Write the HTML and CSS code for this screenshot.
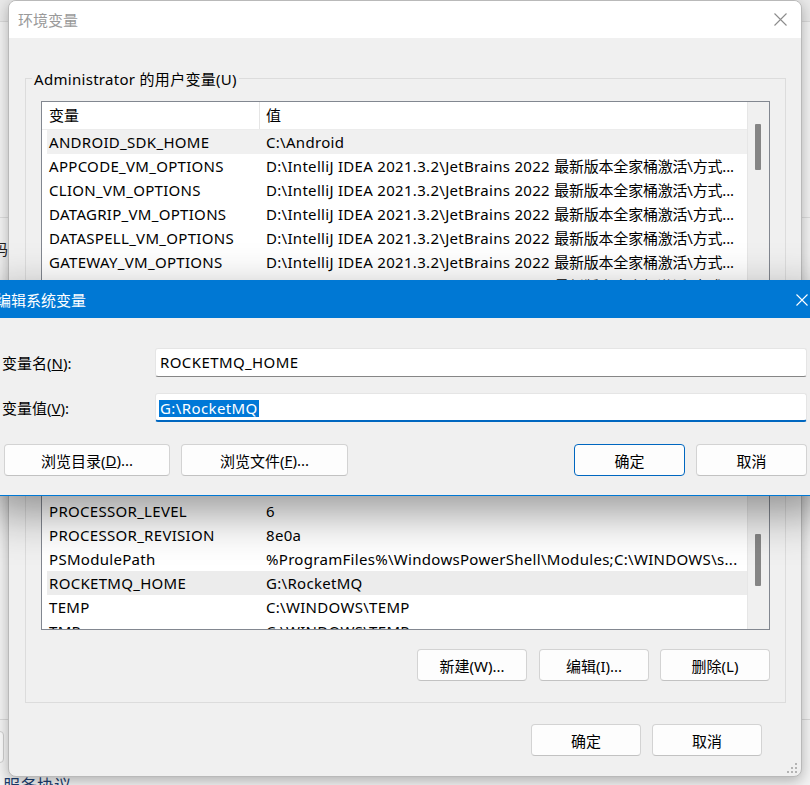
FILE: index.html
```html
<!DOCTYPE html>
<html lang="zh-CN">
<head>
<meta charset="utf-8">
<title>环境变量</title>
<link rel="stylesheet" href="styles.css">
</head>
<body>
<div class="desk">
  <div class="desk-bar"></div>
  <div class="desk-pane"></div>
  <div class="desk-glyph">码</div>
  <div class="desk-space"></div>
  <div class="desk-btn"></div>
  <div class="desk-link">服务协议</div>
</div>

<div class="envwin">
  <div class="titlebar">
    <span class="title">环境变量</span>
    <svg class="x-icon" width="13" height="13" viewBox="0 0 13 13"><path d="M0.5 0.5 L12.5 12.5 M12.5 0.5 L0.5 12.5" stroke="#8c8c8c" stroke-width="1.1" fill="none"/></svg>
  </div>
  <div class="envbody">
    <div class="group g1">
      <div class="legend">Administrator 的用户变量(U)</div>
      <div class="list l1">
        <div class="list-main">
          <div class="lhead"><div class="hc1">变量</div><div class="hc2">值</div></div>
          <div class="row sel"><div class="c1">ANDROID_SDK_HOME</div><div class="c2">C:\Android</div></div>
          <div class="row"><div class="c1">APPCODE_VM_OPTIONS</div><div class="c2">D:\IntelliJ IDEA 2021.3.2\JetBrains 2022 <span class="zh">最新版本全家桶激活\方式...</span></div></div>
          <div class="row"><div class="c1">CLION_VM_OPTIONS</div><div class="c2">D:\IntelliJ IDEA 2021.3.2\JetBrains 2022 <span class="zh">最新版本全家桶激活\方式...</span></div></div>
          <div class="row"><div class="c1">DATAGRIP_VM_OPTIONS</div><div class="c2">D:\IntelliJ IDEA 2021.3.2\JetBrains 2022 <span class="zh">最新版本全家桶激活\方式...</span></div></div>
          <div class="row"><div class="c1">DATASPELL_VM_OPTIONS</div><div class="c2">D:\IntelliJ IDEA 2021.3.2\JetBrains 2022 <span class="zh">最新版本全家桶激活\方式...</span></div></div>
          <div class="row"><div class="c1">GATEWAY_VM_OPTIONS</div><div class="c2">D:\IntelliJ IDEA 2021.3.2\JetBrains 2022 <span class="zh">最新版本全家桶激活\方式...</span></div></div>
          <div class="row"><div class="c1">GOLAND_VM_OPTIONS</div><div class="c2">D:\IntelliJ IDEA 2021.3.2\JetBrains 2022 <span class="zh">最新版本全家桶激活\方式...</span></div></div>
          <div class="row"><div class="c1">IDEA_VM_OPTIONS</div><div class="c2">D:\IntelliJ IDEA 2021.3.2\JetBrains 2022 <span class="zh">最新版本全家桶激活\方式...</span></div></div>
        </div>
        <div class="vscroll"><div class="thumb t1"></div></div>
      </div>
      <div class="btnrow">
        <button class="btn">新建(N)...</button>
        <button class="btn">编辑(E)...</button>
        <button class="btn">删除(D)</button>
      </div>
    </div>

    <div class="group g2">
      <div class="legend">系统变量(S)</div>
      <div class="list l2">
        <div class="list-main">
          <div class="lhead"><div class="hc1">变量</div><div class="hc2">值</div></div>
          <div class="row"><div class="c1">PATHEXT</div><div class="c2">.COM;.EXE;.BAT;.CMD;.VBS;.VBE;.JS;.JSE;.WSF;.WSH;.MSC</div></div>
          <div class="row"><div class="c1">PROCESSOR_ARCHITECTURE</div><div class="c2">AMD64</div></div>
          <div class="row"><div class="c1">PROCESSOR_LEVEL</div><div class="c2">6</div></div>
          <div class="row"><div class="c1">PROCESSOR_REVISION</div><div class="c2">8e0a</div></div>
          <div class="row"><div class="c1">PSModulePath</div><div class="c2">%ProgramFiles%\WindowsPowerShell\Modules;C:\WINDOWS\s...</div></div>
          <div class="row sel2"><div class="c1">ROCKETMQ_HOME</div><div class="c2">G:\RocketMQ</div></div>
          <div class="row"><div class="c1">TEMP</div><div class="c2">C:\WINDOWS\TEMP</div></div>
          <div class="row"><div class="c1">TMP</div><div class="c2">C:\WINDOWS\TEMP</div></div>
        </div>
        <div class="vscroll"><div class="thumb t2"></div></div>
      </div>
      <div class="btnrow">
        <button class="btn">新建(W)...</button>
        <button class="btn">编辑(I)...</button>
        <button class="btn">删除(L)</button>
      </div>
    </div>

    <div class="footer">
      <button class="btn">确定</button>
      <button class="btn">取消</button>
    </div>
  </div>
  <svg class="grip" width="12" height="12" viewBox="0 0 12 12" fill="#b4b4b4">
    <rect x="9" y="1" width="2" height="2"/>
    <rect x="5" y="5" width="2" height="2"/><rect x="9" y="5" width="2" height="2"/>
    <rect x="1" y="9" width="2" height="2"/><rect x="5" y="9" width="2" height="2"/><rect x="9" y="9" width="2" height="2"/>
  </svg>
</div>

<div class="editdlg">
  <div class="dtitle">
    <span class="dtitle-text">编辑系统变量</span>
    <svg width="12" height="12" viewBox="0 0 12 12"><path d="M0.5 0.5 L11.5 11.5 M11.5 0.5 L0.5 11.5" stroke="#ffffff" stroke-width="1.1" fill="none"/></svg>
  </div>
  <div class="dbody">
    <label class="flabel">变量名(<u>N</u>):</label>
    <div class="input">ROCKETMQ_HOME</div>
    <label class="flabel">变量值(<u>V</u>):</label>
    <div class="input focus"><span class="selection">G:\RocketMQ</span></div>
    <div class="dbtns">
      <button class="btn wide">浏览目录(<u>D</u>)...</button>
      <button class="btn wide2">浏览文件(<u>F</u>)...</button>
      <span class="spacer"></span>
      <button class="btn dbtn default">确定</button>
      <button class="btn dbtn">取消</button>
    </div>
  </div>
</div>
</body>
</html>
```

FILE: styles.css
```css
* { box-sizing: border-box; }

html, body {
  margin: 0;
  padding: 0;
}

body {
  width: 810px;
  height: 785px;
  overflow: hidden;
  position: relative;
  background: #f3f3f3;
  font-family: "Noto Sans", "Noto Sans CJK SC", sans-serif;
  font-size: 15px;
  color: #000;
}

/* background application behind the windows */
.desk {
  display: flex;
  flex-direction: column;
  height: 785px;
}
.desk > * { flex: none; }
.desk-bar {
  height: 22px;
  background: #e9e9e9;
  border-bottom: 1px solid #d9d9d9;
}
.desk-pane {
  height: 196px;
  background: #f2f2f2;
  border-bottom: 1px solid #dcdcdc;
}
.desk-glyph {
  margin-top: 21px;
  margin-left: -7px;
  line-height: 20px;
  font-size: 15px;
  color: #222;
}
.desk-space {
  height: 461px;
  border-bottom: 1px solid #d8d8d8;
}
.desk-btn {
  margin-top: 11px;
  margin-left: -8px;
  width: 12px;
  height: 32px;
  border: 1px solid #cfcfcf;
  border-radius: 4px;
  background: #fbfbfb;
}
.desk-link {
  margin-top: 12px;
  margin-left: 3px;
  font-size: 17px;
  line-height: 22px;
  color: #1c3d6e;
}

/* environment variables window */
.envwin {
  position: absolute;
  left: 8px;
  top: 0;
  width: 794px;
  height: 777px;
  border: 1px solid #b9b9b9;
  border-radius: 8px;
  background: #f0f0f0;
  box-shadow: 0 4px 14px rgba(0, 0, 0, 0.28);
  overflow: hidden;
  display: flex;
  flex-direction: column;
}
.titlebar {
  height: 37px;
  flex: none;
  background: #fff;
  display: flex;
  align-items: center;
  justify-content: space-between;
  padding: 0 14px 0 9px;
}
.title {
  color: #9a9a9a;
  font-size: 15px;
}
.envbody {
  flex: 1;
  padding: 40px 15px 0 16px;
}

.group {
  border: 1px solid #dcdcdc;
  padding: 0 15px;
}
.g1 { padding-bottom: 10px; }
.g2 { margin-top: 35px; padding-bottom: 21px; }
.legend {
  width: max-content;
  margin: -10px 0 0 -9px;
  padding: 0 2px;
  line-height: 20px;
  letter-spacing: 0.3px;
  background: #f0f0f0;
}

.list {
  margin-top: 12px;
  border: 1px solid #828790;
  background: #fff;
  display: flex;
}
.l1 { height: 210px; }
.l2 { height: 208px; }
.list-main {
  flex: 1;
  min-width: 0;
  overflow: hidden;
}
.lhead {
  height: 28px;
  display: flex;
  border-bottom: 1px solid #ececec;
}
.hc1 {
  width: 218px;
  padding-left: 7px;
  line-height: 27px;
  border-right: 1px solid #e5e5e5;
}
.hc2 {
  padding-left: 6px;
  line-height: 27px;
}
.row {
  height: 24px;
  line-height: 24px;
  margin-left: 5px;
  display: flex;
  white-space: nowrap;
  letter-spacing: 0.3px;
}
.row .zh { letter-spacing: -0.2px; }
.row.sel { background: #f0f0f0; }
.row.sel2 { background: #ececec; }
.c1 {
  width: 219px;
  flex: none;
  padding-left: 2px;
  overflow: hidden;
}
.c2 {
  flex: 1;
  min-width: 0;
  overflow: hidden;
}
.vscroll {
  width: 22px;
  flex: none;
  background: #f0f0f0;
  border-left: 1px solid #e6e6e6;
}
.thumb {
  width: 6px;
  margin-left: 7px;
  background: #858585;
  border-radius: 1px;
}
.t1 { margin-top: 22px; height: 46px; }
.t2 { margin-top: 111px; height: 52px; }

.btnrow {
  display: flex;
  justify-content: flex-end;
  gap: 11px;
}
.g1 .btnrow { margin-top: 10px; }
.g2 .btnrow { margin-top: 19px; }

.btn {
  width: 110px;
  height: 32px;
  padding: 0;
  font: inherit;
  color: #000;
  background: #fdfdfd;
  border: 1px solid #d3d3d3;
  border-bottom-color: #c2c2c2;
  border-radius: 4px;
  display: flex;
  align-items: center;
  justify-content: center;
}
.g2 .btnrow .btn:first-child { margin-right: 1px; }

.footer {
  margin-top: 21px;
  padding-right: 24px;
  display: flex;
  justify-content: flex-end;
  gap: 11px;
}

.grip {
  position: absolute;
  right: 3px;
  bottom: 2px;
}

/* edit dialog */
.editdlg {
  position: absolute;
  left: -12px;
  top: 280px;
  width: 840px;
  height: 216px;
  border: 1px solid #0078d4;
  background: #f0f0f0;
  box-shadow: 0 16px 44px rgba(0, 0, 0, 0.42);
  display: flex;
  flex-direction: column;
}
.dtitle {
  height: 37px;
  flex: none;
  background: #0078d4;
  color: #fff;
  display: flex;
  align-items: center;
  justify-content: space-between;
  padding: 0 19px 0 7px;
}
.dtitle-text { font-size: 15px; }
.dbody {
  flex: 1;
  padding: 30px 20px 0 13px;
  display: grid;
  grid-template-columns: 153px 1fr;
  grid-auto-rows: min-content;
  row-gap: 16px;
  align-items: center;
}
.flabel { line-height: 20px; }
.input {
  height: 29px;
  background: #fff;
  border: 1px solid #e5e5e5;
  border-bottom-color: #868686;
  border-radius: 3px;
  padding-left: 4px;
  line-height: 27px;
  white-space: nowrap;
  letter-spacing: 0.4px;
}
.input.focus {
  border-bottom: 2px solid #0067c0;
  padding-left: 3px;
  line-height: 26px;
}
.selection {
  display: inline-block;
  background: #0078d7;
  color: #fff;
  line-height: 17px;
  padding: 0 1px;
  vertical-align: middle;
}
.dbtns {
  grid-column: 1 / -1;
  margin-top: 6px;
  display: flex;
  gap: 11px;
}
.btn.wide { width: 166px; margin-left: 2px; }
.btn.wide2 { width: 167px; }
.spacer { flex: 1; }
.btn.dbtn { width: 111px; }
.btn.default { border-color: #0067c0; }
```
